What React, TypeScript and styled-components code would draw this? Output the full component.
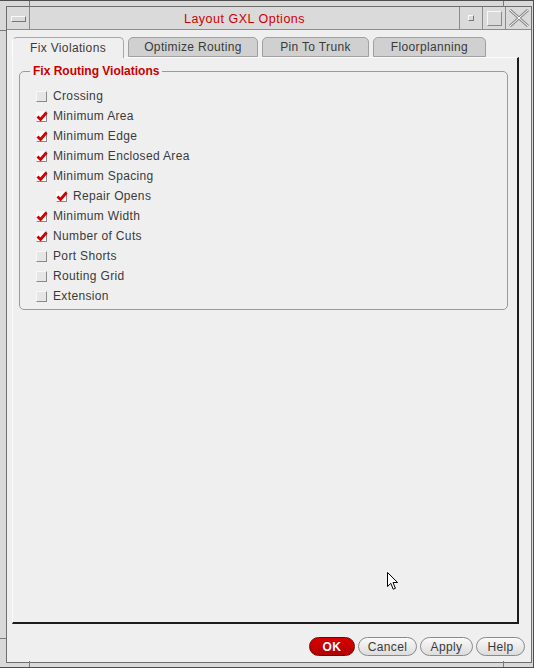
import React from 'react';
import styled, { createGlobalStyle } from 'styled-components';

const GlobalStyle = createGlobalStyle`
  html, body { margin: 0; padding: 0; background: #d8d8d8; }
  body { font-family: "Liberation Sans", Arial, sans-serif; }
`;

type Item = { label: string; checked: boolean; indent?: boolean };

const items: Item[] = [
    { label: 'Crossing', checked: false },
    { label: 'Minimum Area', checked: true },
    { label: 'Minimum Edge', checked: true },
    { label: 'Minimum Enclosed Area', checked: true },
    { label: 'Minimum Spacing', checked: true },
    { label: 'Repair Opens', checked: true, indent: true },
    { label: 'Minimum Width', checked: true },
    { label: 'Number of Cuts', checked: true },
    { label: 'Port Shorts', checked: false },
    { label: 'Routing Grid', checked: false },
    { label: 'Extension', checked: false },
];

const tabs = [
    { label: 'Fix Violations', width: 112, active: true },
    { label: 'Optimize Routing', width: 130, active: false },
    { label: 'Pin To Trunk', width: 107, active: false },
    { label: 'Floorplanning', width: 113, active: false },
];

const App = () => {
    return (
        <>
            <GlobalStyle />
            <Window>
                <Inner>
                    <TitleBar>
                        <MenuButton><MenuBar /></MenuButton>
                        <Title>Layout GXL Options</Title>
                        <WinButton $w={23}><SmallSquare /></WinButton>
                        <WinButton $w={23}><BigSquare /></WinButton>
                        <WinButton $w={26}>
                            <svg width="22" height="18" viewBox="0 0 22 18">
                                <path d="M2 1 L20 17 M20 1 L2 17" stroke="#8a8a8a" strokeWidth="3" />
                                <path d="M2 1 L20 17 M20 1 L2 17" stroke="#ffffff" strokeWidth="1" />
                            </svg>
                        </WinButton>
                    </TitleBar>
                    <Client>
                        <TabRow>
                            {tabs.map(t => (
                                <Tab key={t.label} $active={t.active} $w={t.width}>{t.label}</Tab>
                            ))}
                        </TabRow>
                        <Panel>
                            <Group>
                                <Legend>Fix Routing Violations</Legend>
                                {items.map(it => (
                                    <Row key={it.label} $indent={!!it.indent}>
                                        <Box $checked={it.checked}>
                                            {it.checked && (
                                                <svg width="12" height="11" viewBox="0 0 12 11">
                                                    <path d="M1.5 5.5 L4.5 8.5 L10.5 1.5" stroke="#d40000" strokeWidth="2.8" fill="none" />
                                                </svg>
                                            )}
                                        </Box>
                                        <Label>{it.label}</Label>
                                    </Row>
                                ))}
                            </Group>
                        </Panel>
                        <ButtonRow>
                            <Button $primary $w={46}>OK</Button>
                            <Button $w={59}>Cancel</Button>
                            <Button $w={53}>Apply</Button>
                            <Button $w={49}>Help</Button>
                        </ButtonRow>
                    </Client>
                </Inner>
                <Tick style={{ left: 29, top: 0, width: 1, height: 6 }} />
                <Tick style={{ left: 503, top: 0, width: 1, height: 6 }} />
                <Tick style={{ left: 29, bottom: 0, width: 1, height: 6 }} />
                <Tick style={{ left: 503, bottom: 0, width: 1, height: 6 }} />
                <Tick style={{ left: 0, top: 29, width: 6, height: 1 }} />
                <Tick style={{ left: 0, top: 637, width: 6, height: 1 }} />
                <Cursor>
                    <svg width="12" height="19" viewBox="0 0 12 19">
                        <path d="M0.5 0.5 L0.5 14.5 L3.8 11.3 L6.2 17.2 L8.4 16.3 L6 10.5 L10.6 10.5 Z" fill="#ffffff" stroke="#000000" strokeWidth="1" />
                    </svg>
                </Cursor>
            </Window>
        </>
    );
};

const Window = styled.div`
  position: relative;
  width: 534px;
  height: 668px;
  box-sizing: border-box;
  background: #d9d9d9;
  border-top: 1px solid #4d4d4d;
  border-right: 1px solid #4d4d4d;
  border-bottom: 1px solid #4d4d4d;
  padding: 5px 1px 4px 6px;
  display: flex;
`;

const Inner = styled.div`
  flex: 1;
  display: flex;
  flex-direction: column;
  border: 1px solid #6e6e6e;
`;

const TitleBar = styled.div`
  height: 22px;
  display: flex;
  align-items: stretch;
  border-bottom: 1px solid #8c8c8c;
  background: #dadada;
`;

const MenuButton = styled.div`
  width: 22px;
  border-right: 1px solid #8c8c8c;
  display: flex;
  align-items: center;
  justify-content: center;
`;

const MenuBar = styled.div`
  width: 13px;
  height: 4px;
  border: 1px solid #f8f8f8;
  border-right-color: #777;
  border-bottom-color: #777;
  margin-top: 1px;
`;

const Title = styled.div`
  flex: 1;
  display: flex;
  align-items: center;
  justify-content: center;
  font-size: 12.5px;
  letter-spacing: 0.5px;
  color: #d00000;
  padding-top: 1px;
`;

const WinButton = styled.div<{ $w: number }>`
  width: ${p => p.$w - 1}px;
  border-left: 1px solid #8c8c8c;
  display: flex;
  align-items: center;
  justify-content: center;
`;

const SmallSquare = styled.div`
  width: 4px;
  height: 4px;
  border: 1px solid #f8f8f8;
  border-right-color: #777;
  border-bottom-color: #777;
`;

const BigSquare = styled.div`
  width: 13px;
  height: 13px;
  border: 1px solid #f8f8f8;
  border-right-color: #888;
  border-bottom-color: #888;
`;

const Client = styled.div`
  flex: 1;
  display: flex;
  flex-direction: column;
  background: #efefef;
  padding: 7px 6px 3px 5px;
`;

const TabRow = styled.div`
  display: flex;
  align-items: flex-end;
  gap: 4px;
  height: 20px;
  position: relative;
  z-index: 1;
`;

const Tab = styled.div<{ $active: boolean; $w: number }>`
  width: ${p => p.$w}px;
  box-sizing: border-box;
  height: ${p => (p.$active ? 21 : 20)}px;
  margin-bottom: ${p => (p.$active ? -1 : 0)}px;
  background: ${p => (p.$active ? '#efefef' : '#d0d0d0')};
  border: 1px solid ${p => (p.$active ? '#a8a8a8' : '#a0a0a0')};
  border-left-color: ${p => (p.$active ? '#ffffff' : '#a0a0a0')};
  border-bottom: ${p => (p.$active ? 'none' : '1px solid #a0a0a0')};
  border-radius: 5px 5px 0 0;
  font-size: 12px;
  letter-spacing: 0.35px;
  color: #3a3a3a;
  display: flex;
  align-items: center;
  justify-content: center;
  padding-bottom: ${p => (p.$active ? 1 : 0)}px;
`;

const Panel = styled.div`
  flex: 1;
  margin-right: 6px;
  border-top: 1px solid #fbfbfb;
  border-left: 1px solid #fbfbfb;
  border-right: 2px solid #1c1c1c;
  border-bottom: 2px solid #1c1c1c;
  background: #efefef;
  display: flex;
  flex-direction: column;
  align-items: stretch;
`;

const Group = styled.fieldset`
  margin: 6px 9px 0 6px;
  padding: 8px 0 3px 0;
  border: 1px solid #9a9a9a;
  border-radius: 5px;
  min-width: 0;
`;

const Legend = styled.legend`
  margin-left: 10px;
  padding: 0 3px;
  font-size: 12px;
  line-height: 14px;
  font-weight: bold;
  color: #c80000;
`;

const Row = styled.div<{ $indent: boolean }>`
  height: 20px;
  display: flex;
  align-items: center;
  padding-left: ${p => (p.$indent ? 36 : 16)}px;
`;

const Box = styled.div<{ $checked: boolean }>`
  position: relative;
  width: 9px;
  height: 9px;
  margin-right: 6px;
  background: ${p => (p.$checked ? '#ffffff' : '#e6e6e6')};
  border: 1px solid #f8f8f8;
  border-right-color: #8a8a8a;
  border-bottom-color: #8a8a8a;
  svg {
    position: absolute;
    left: -1px;
    top: -1px;
  }
`;

const Label = styled.span`
  font-size: 12px;
  letter-spacing: 0.35px;
  color: #3a3a3a;
`;

const ButtonRow = styled.div`
  height: 35px;
  box-sizing: border-box;
  padding-top: 13px;
  display: flex;
  justify-content: flex-end;
  align-items: flex-start;
  gap: 3px;
`;

const Button = styled.div<{ $primary?: boolean; $w: number }>`
  width: ${p => p.$w}px;
  height: 19px;
  box-sizing: border-box;
  border-radius: 10px;
  border: 1px solid ${p => (p.$primary ? '#7a0000' : '#8a8a8a')};
  background: ${p => (p.$primary
        ? 'linear-gradient(#d80000, #b00000)'
        : 'linear-gradient(#fafafa, #dcdcdc)')};
  color: ${p => (p.$primary ? '#ffffff' : '#3a3a3a')};
  font-weight: ${p => (p.$primary ? 'bold' : 'normal')};
  font-size: 12px;
  letter-spacing: ${p => (p.$primary ? 0.6 : 0.35)}px;
  display: flex;
  align-items: center;
  justify-content: center;
`;

const Tick = styled.div`
  position: absolute;
  background: #7a7a7a;
`;

const Cursor = styled.div`
  position: absolute;
  left: 387px;
  top: 571px;
  line-height: 0;
`;

export default App
